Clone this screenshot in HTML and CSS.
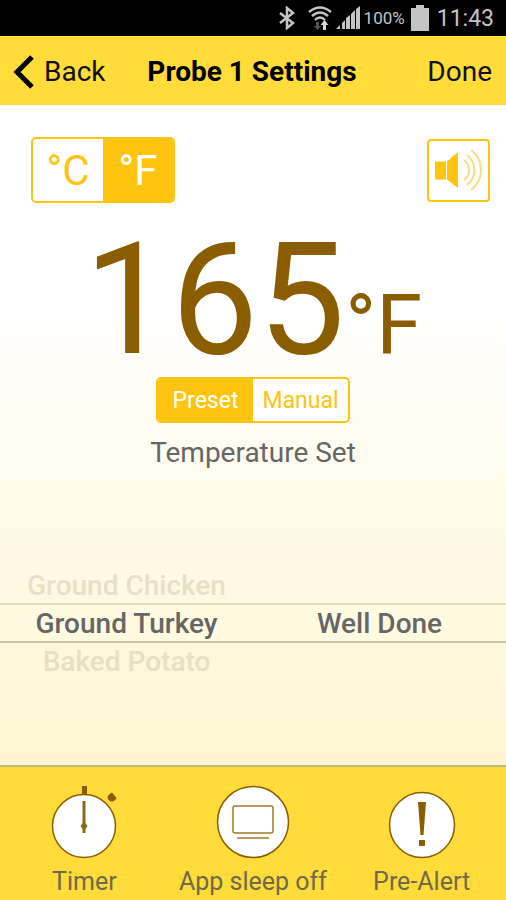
FILE: index.html
```
<!DOCTYPE html>
<html lang="en">
<head>
    <meta charset="UTF-8">
    <meta name="viewport" content="width=device-width, initial-scale=1.0">
    <title>Probe 1 Settings</title>
    <link rel="stylesheet" href="styles.css">
</head>
<body>

    <!-- Status Bar -->
    <div class="status-bar">
        <svg class="status-icon bluetooth-icon" width="18" height="24" viewBox="0 0 18 24" aria-hidden="true">
            <path d="M2 7l13 10-6 5V2l6 5L2 17" fill="none" stroke="#c4c4c4" stroke-width="2.5"/>
        </svg>
        <svg class="status-icon wifi-icon" width="24" height="26" viewBox="0 0 24 26" aria-hidden="true">
            <g fill="none" stroke="#c4c4c4" stroke-width="2.4">
                <path d="M1 7Q12-2 23 7"/>
                <path d="M4 11Q12 4 20 11"/>
                <path d="M7 15Q12 10 17 15"/>
            </g>
            <path d="M8 17h3v4h2l-3.500 4-3.500-4h2z" fill="#555"/>
            <path d="M15 25v-5h-2.500l4-5 4 5H18v5z" fill="#d8d8d8"/>
        </svg>
        <svg class="status-icon signal-icon" width="24" height="24" viewBox="0 0 24 24" aria-hidden="true">
            <path d="M0 23l4-4v4zM6 23v-6l3-3v9zM10 23V12l4-3v14zM15 23V8l4-4v19zM20 23V3l4-3v23z" fill="#c4c4c4"/>
        </svg>
        <span class="battery-text">100%</span>
        <svg class="status-icon" width="18" height="26" viewBox="0 0 18 26" aria-hidden="true">
            <path d="M5 0h8v3h5v23H0V3h5z" fill="#c4c4c4"/>
        </svg>
        <span class="clock">11:43</span>
    </div>

    <!-- Header Section -->
    <header class="header">
        <button class="header-btn back-btn" type="button">
            <svg width="22" height="34" viewBox="0 0 22 34" aria-hidden="true">
                <path d="M20 2L5 17l15 15" fill="none" stroke="#000" stroke-width="5"/>
            </svg>
            Back
        </button>
        <h1 class="title">Probe 1 Settings</h1>
        <button class="header-btn done-btn" type="button">Done</button>
    </header>

    <!-- Temperature Section -->
    <main class="content">
        <div class="top-row">
            <div class="switch unit-switch" role="radiogroup" aria-label="Unit">
                <input type="radio" name="unit" id="unit-c">
                <label for="unit-c">°C</label>
                <input type="radio" name="unit" id="unit-f" checked>
                <label for="unit-f">°F</label>
            </div>
            <button class="sound-btn" type="button" aria-label="Sound">
                <svg width="50" height="40" viewBox="0 0 50 40" aria-hidden="true">
                    <path d="M1 11.500h11v18H1zM13 11.500L24 2v36L13 29.500z" fill="#ffc40f"/>
                    <g fill="none" stroke="#fbdc83" stroke-width="2">
                        <path d="M30 10a12.500 12.500 0 0 1 0 20"/>
                        <path d="M33 5a19 19 0 0 1 0 30"/>
                        <path d="M37 0a25 25 0 0 1 0 40"/>
                    </g>
                </svg>
            </button>
        </div>

        <p class="temperature">165<span class="unit">°F</span></p>

        <div class="switch mode-switch" role="radiogroup" aria-label="Mode">
            <input type="radio" name="mode" id="mode-preset" checked>
            <label for="mode-preset">Preset</label>
            <input type="radio" name="mode" id="mode-manual">
            <label for="mode-manual">Manual</label>
        </div>
        <p class="caption">Temperature Set</p>

        <!-- Preset Picker -->
        <div class="picker">
            <button class="option" type="button">Ground Chicken</button>
            <div class="selected-row">
                <button class="option selected" type="button">Ground Turkey</button>
                <button class="option selected" type="button">Well Done</button>
            </div>
            <button class="option" type="button">Baked Potato</button>
        </div>
    </main>

    <!-- Bottom Bar -->
    <nav class="bottom-bar">
        <button class="tab" type="button">
            <svg width="76" height="76" viewBox="0 0 76 76" aria-hidden="true">
                <circle cx="38" cy="42" r="31.500" fill="#fff" stroke="#8a5d00" stroke-width="1.500"/>
                <path d="M36 2h5v9h-5z" fill="#8a5d00"/>
                <path d="M62 14c0-3 2-4 4-5l4 5c-1 3-5 4-7 2z" fill="#8a5d00" stroke="#8a5d00" stroke-linejoin="round"/>
                <path d="M36.500 17h3v22l2 3-2 3v4h-3v-4l-2-3 2-3z" fill="#8a6a20"/>
            </svg>
            Timer
        </button>
        <button class="tab" type="button">
            <svg width="76" height="76" viewBox="0 0 76 76" aria-hidden="true">
                <circle cx="38" cy="38" r="35.500" fill="#fff" stroke="#8a5d00" stroke-width="1.500"/>
                <g fill="none" stroke="#a17a26" stroke-width="1.500">
                    <rect x="18" y="22" width="40" height="27" rx="2"/>
                    <path d="M22 54h32"/>
                </g>
            </svg>
            App sleep off
        </button>
        <button class="tab" type="button">
            <svg width="76" height="76" viewBox="0 0 76 76" aria-hidden="true">
                <circle cx="38" cy="41" r="32.500" fill="#fff" stroke="#8a5d00" stroke-width="1.500"/>
                <path d="M34 18h8l-2.500 33h-3zM35 56h6v6h-6z" fill="#8a5d00"/>
            </svg>
            Pre-Alert
        </button>
    </nav>

</body>
</html>
```
FILE: styles.css
```
/* Global Styles */
* {
    box-sizing: border-box;
}
body {
    margin: 0;
    min-height: 100vh;
    display: flex;
    flex-direction: column;
    font-family: Roboto, sans-serif;
    background-color: #fff;
    color: #666;
}
button {
    font-family: inherit;
    border: none;
    background: none;
    padding: 0;
    cursor: pointer;
}

/* Status Bar */
.status-bar {
    height: 36px;
    padding: 0 12px;
    display: flex;
    align-items: center;
    justify-content: flex-end;
    background-color: #000;
    color: #c4c4c4;
}
.status-icon {
    margin-right: 8px;
}
.bluetooth-icon {
    margin-right: 12px;
}
.wifi-icon,
.signal-icon {
    margin-right: 4px;
}
.battery-text {
    font-size: 17px;
    margin-right: 6px;
}
.clock {
    font-size: 23px;
}

/* Header Section */
.header {
    height: 69px;
    padding: 2px 14px 0 12px;
    display: grid;
    grid-template-columns: 1fr auto 1fr;
    align-items: center;
    background-color: #ffdc3a;
    color: #000;
}
.header-btn {
    font-size: 28px;
    color: #111;
}
.back-btn {
    display: flex;
    align-items: center;
    gap: 10px;
}
.done-btn {
    justify-self: end;
}
.title {
    margin: 0;
    font-size: 28px;
    font-weight: bold;
}

/* Temperature Section */
.content {
    flex: 1;
    display: flex;
    flex-direction: column;
    align-items: center;
    background: linear-gradient(#fff 30%, #fff5d0);
}
.top-row {
    align-self: stretch;
    display: flex;
    align-items: center;
    justify-content: space-between;
    padding: 32px 16px 0 31px;
}

/* Switches */
.switch {
    display: flex;
    border: 2px solid #ffc40f;
    border-radius: 5px;
    background-color: #fff;
    overflow: hidden;
}
.switch input {
    appearance: none;
    position: absolute;
    margin: 0;
}
.switch label {
    display: flex;
    align-items: center;
    justify-content: center;
    color: #ffc40f;
    cursor: pointer;
}
.switch input:checked + label {
    background-color: #ffc40f;
    color: #fff;
}
.unit-switch label {
    width: 70px;
    height: 62px;
    font-size: 42px;
}
.mode-switch label {
    width: 95px;
    height: 42px;
    font-size: 23px;
}

.sound-btn {
    width: 63px;
    height: 63px;
    display: flex;
    align-items: center;
    justify-content: center;
    border: 2px solid #ffc40f;
    border-radius: 4px;
    background-color: #fff;
}

.temperature {
    margin: 20px 0 0;
    font-size: 155px;
    line-height: 154px;
    color: #8a5d00;
}
.unit {
    font-size: 83px;
    line-height: 1;
}
.caption {
    margin: 13px 0 0;
    font-size: 28px;
    line-height: 34px;
}

/* Preset Picker */
.picker {
    align-self: stretch;
    margin: auto 0 86px;
}
.option {
    display: block;
    width: 50%;
    height: 36px;
    font-size: 28px;
    font-weight: 500;
    color: #e6e0c8;
}
.selected-row {
    display: flex;
    border-top: 2px solid #dedbc4;
    border-bottom: 2px solid #c8c5aa;
    background-color: #fffae0;
}
.option.selected {
    color: #666;
}

/* Bottom Bar */
.bottom-bar {
    display: grid;
    grid-template-columns: repeat(3, 1fr);
    padding: 17px 0 3px;
    border-top: 2px solid #bdbb80;
    background-color: #ffdc3a;
}
.tab {
    display: flex;
    flex-direction: column;
    align-items: center;
    gap: 7px;
    font-size: 25px;
    line-height: 30px;
    color: #6f6a4a;
    white-space: nowrap;
}
```
